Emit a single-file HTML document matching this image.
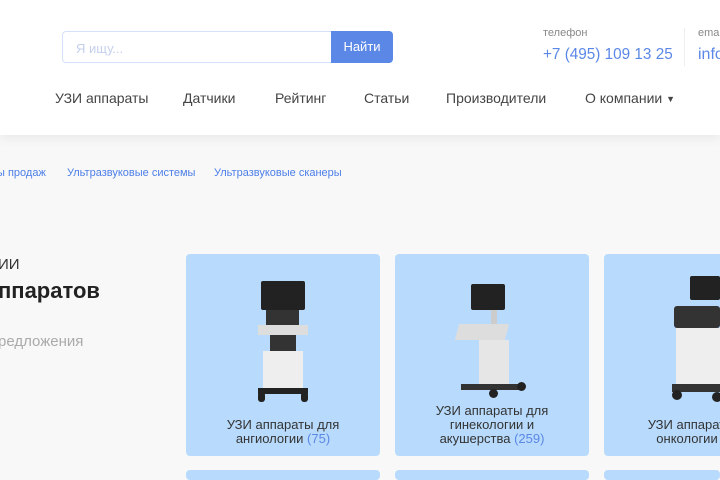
<!DOCTYPE html>
<html style="width:720px;height:480px;overflow:hidden"><head><meta charset="utf-8"><style>
*{box-sizing:border-box;margin:0;padding:0}
body{width:720px;height:480px;overflow:hidden;background:#f8f8f8;font-family:"Liberation Sans","Noto Sans CJK SC",sans-serif;position:relative}
.hdr{position:absolute;left:0;top:0;width:720px;height:135px;background:#fff;box-shadow:0 4px 10px rgba(0,0,0,.06)}
.abs{position:absolute;white-space:nowrap}
.search{left:62px;top:31px;width:270px;height:32px;border:1px solid #d5e0fb;border-right:none;border-radius:4px 0 0 4px;font-size:13px;color:#c5d0ee;padding:9px 0 0 13px}
.btn{left:331px;top:31px;width:62px;height:32px;background:#5b87e6;border-radius:0 4px 4px 0;color:#fff;font-size:13px;text-align:center;line-height:32px}
.nav{top:90px;font-size:14px;color:#444}
.bc{top:167px;font-size:11px;color:#4c7ee8}
.card{position:absolute;width:194px;height:202px;background:#b8dbfd;border-radius:4px;overflow:hidden}
.cap{position:absolute;left:0;right:0;bottom:10px;text-align:center;font-size:13px;line-height:14px;color:#333}
.cap span{color:#5b87e6}
.d{position:absolute;background:#222}
</style></head><body>
<div class="hdr"></div>
<div class="abs search">Я ищу...</div>
<div class="abs btn">Найти</div>
<div class="abs" style="left:543px;top:27px;font-size:11px;color:#888">телефон</div>
<div class="abs" style="left:543px;top:46px;font-size:15.3px;color:#5b87e6">+7 (495) 109 13 25</div>
<div class="abs" style="left:684px;top:28px;width:1px;height:38px;background:#eee"></div>
<div class="abs" style="left:698px;top:27px;font-size:11px;color:#888">email</div>
<div class="abs" style="left:698px;top:46px;font-size:16px;color:#5b87e6">info</div>
<div class="abs nav" style="left:55px">УЗИ аппараты</div>
<div class="abs nav" style="left:183px">Датчики</div>
<div class="abs nav" style="left:275px">Рейтинг</div>
<div class="abs nav" style="left:364px">Статьи</div>
<div class="abs nav" style="left:446px">Производители</div>
<div class="abs nav" style="left:585px">О компании <span style="font-size:9px;position:relative;top:-1px">&#9660;</span></div>
<div class="abs bc" style="left:-3px">ы продаж</div>
<div class="abs bc" style="left:67px">Ультразвуковые системы</div>
<div class="abs bc" style="left:214px">Ультразвуковые сканеры</div>
<div class="abs" style="left:-2px;top:256px;font-size:15px;color:#333">ИИ</div>
<div class="abs" style="left:-2px;top:278px;font-size:22px;font-weight:bold;color:#222">ппаратов</div>
<div class="abs" style="left:-2px;top:333px;font-size:15px;color:#aaa">редложения</div>

<div class="card" style="left:186px;top:254px">
 <div class="d" style="left:75px;top:27px;width:44px;height:29px;border-radius:2px"></div>
 <div class="d" style="left:80px;top:56px;width:33px;height:15px;background:#333"></div>
 <div class="d" style="left:72px;top:71px;width:50px;height:10px;background:#ddd"></div>
 <div class="d" style="left:84px;top:81px;width:26px;height:16px;background:#333"></div>
 <div class="d" style="left:77px;top:97px;width:40px;height:37px;background:#eee"></div>
 <div class="d" style="left:72px;top:134px;width:50px;height:6px"></div>
 <div class="d" style="left:72px;top:138px;width:7px;height:10px;border-radius:3px"></div>
 <div class="d" style="left:115px;top:138px;width:7px;height:10px;border-radius:3px"></div>
 <div class="cap">УЗИ аппараты для<br>ангиологии <span>(75)</span></div>
</div>
<div class="card" style="left:395px;top:254px">
 <div class="d" style="left:76px;top:30px;width:34px;height:26px;border-radius:2px"></div>
 <div class="d" style="left:96px;top:56px;width:6px;height:14px;background:#ccc"></div>
 <div class="d" style="left:62px;top:70px;width:50px;height:16px;background:#ddd;transform:skewX(-15deg)"></div>
 <div class="d" style="left:84px;top:86px;width:30px;height:44px;background:#e6e6e6"></div>
 <div class="d" style="left:66px;top:130px;width:60px;height:6px;background:#333"></div>
 <div class="d" style="left:94px;top:135px;width:9px;height:9px;border-radius:50%"></div>
 <div class="d" style="left:122px;top:128px;width:9px;height:9px;border-radius:50%"></div>
 <div class="cap">УЗИ аппараты для<br>гинекологии и<br>акушерства <span>(259)</span></div>
</div>
<div class="card" style="left:604px;top:254px;width:116px;border-radius:4px 0 0 4px">
 <div class="d" style="left:86px;top:22px;width:30px;height:24px;border-radius:2px"></div>
 <div class="d" style="left:70px;top:52px;width:46px;height:22px;background:#333;border-radius:3px"></div>
 <div class="d" style="left:72px;top:74px;width:44px;height:56px;background:#eee"></div>
 <div class="d" style="left:68px;top:130px;width:48px;height:8px;background:#333"></div>
 <div class="d" style="left:68px;top:136px;width:10px;height:10px;border-radius:50%"></div>
 <div class="d" style="left:108px;top:138px;width:10px;height:10px;border-radius:50%"></div>
 <div class="cap" style="left:0;right:auto;width:194px;padding-left:6px">УЗИ аппараты для<br>онкологии <span>(150)</span></div>
</div>
<div class="card" style="left:186px;top:470px;height:10px"></div>
<div class="card" style="left:395px;top:470px;height:10px"></div>
<div class="card" style="left:604px;top:470px;height:10px;width:116px"></div>
</body></html>
